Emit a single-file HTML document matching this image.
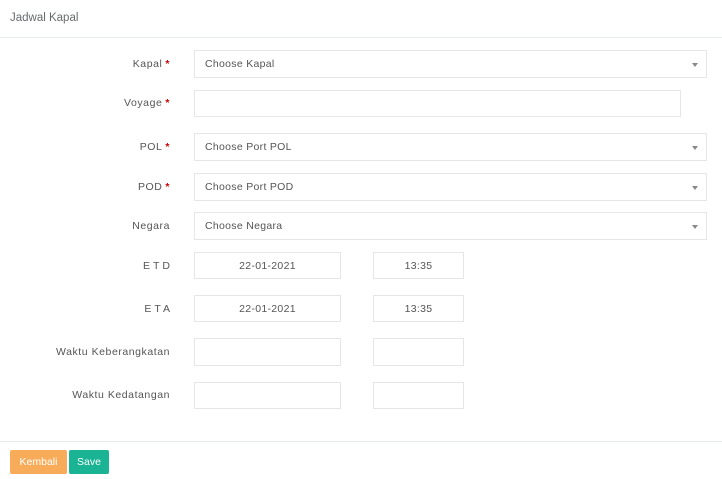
<!DOCTYPE html>
<html><head><meta charset="utf-8"><style>
*{box-sizing:border-box;margin:0;padding:0}
body{width:722px;height:479px;background:#fff;font-family:"Liberation Sans",sans-serif;font-size:10.5px;color:#676a6c;position:relative;overflow:hidden}
.a{position:absolute}
.hl{position:absolute;left:0;width:722px;height:1px;background:#e7eaec}
.lbl{position:absolute;right:552px;text-align:right;color:#555;white-space:nowrap;line-height:14px;letter-spacing:0.55px}
.lbl b{color:#c00;font-weight:bold;margin-left:3px}
.f{position:absolute;border:1px solid #e5e6e7;background:#fff;line-height:26px;padding-left:10px;color:#555;letter-spacing:0.3px}
.f.c{text-align:center;padding-left:0}
.arr{position:absolute;right:8px;top:12px;width:0;height:0;border-left:3px solid transparent;border-right:3px solid transparent;border-top:4px solid #888}
.btn{position:absolute;top:450px;height:24px;line-height:24px;color:#fff;text-align:center;border-radius:2px;font-size:10.5px}
</style></head><body>
<div class="a" style="left:10px;top:12px;font-size:11.5px;color:#676a6c">Jadwal Kapal</div>
<div class="hl" style="top:37px"></div>

<div class="lbl" style="top:57px">Kapal<b>*</b></div>
<div class="f" style="left:194px;top:50px;width:513px;height:28px">Choose Kapal<span class="arr"></span></div>

<div class="lbl" style="top:96px">Voyage<b>*</b></div>
<div class="f" style="left:194px;top:90px;width:487px;height:27px"></div>

<div class="lbl" style="top:140px">POL<b>*</b></div>
<div class="f" style="left:194px;top:133px;width:513px;height:28px">Choose Port POL<span class="arr"></span></div>

<div class="lbl" style="top:180px">POD<b>*</b></div>
<div class="f" style="left:194px;top:173px;width:513px;height:28px">Choose Port POD<span class="arr"></span></div>

<div class="lbl" style="top:219px">Negara</div>
<div class="f" style="left:194px;top:212px;width:513px;height:28px">Choose Negara<span class="arr"></span></div>

<div class="lbl" style="top:259px;letter-spacing:3px;margin-right:-3px">ETD</div>
<div class="f c" style="left:194px;top:252px;width:147px;height:27px">22-01-2021</div>
<div class="f c" style="left:373px;top:252px;width:91px;height:27px">13:35</div>

<div class="lbl" style="top:302px;letter-spacing:3px;margin-right:-3px">ETA</div>
<div class="f c" style="left:194px;top:295px;width:147px;height:27px">22-01-2021</div>
<div class="f c" style="left:373px;top:295px;width:91px;height:27px">13:35</div>

<div class="lbl" style="top:345px">Waktu Keberangkatan</div>
<div class="f" style="left:194px;top:338px;width:147px;height:28px"></div>
<div class="f" style="left:373px;top:338px;width:91px;height:28px"></div>

<div class="lbl" style="top:388px">Waktu Kedatangan</div>
<div class="f" style="left:194px;top:382px;width:147px;height:27px"></div>
<div class="f" style="left:373px;top:382px;width:91px;height:27px"></div>

<div class="hl" style="top:441px"></div>
<div class="btn" style="left:10px;width:57px;background:#f8ac59">Kembali</div>
<div class="btn" style="left:69px;width:40px;background:#1ab394">Save</div>
</body></html>
